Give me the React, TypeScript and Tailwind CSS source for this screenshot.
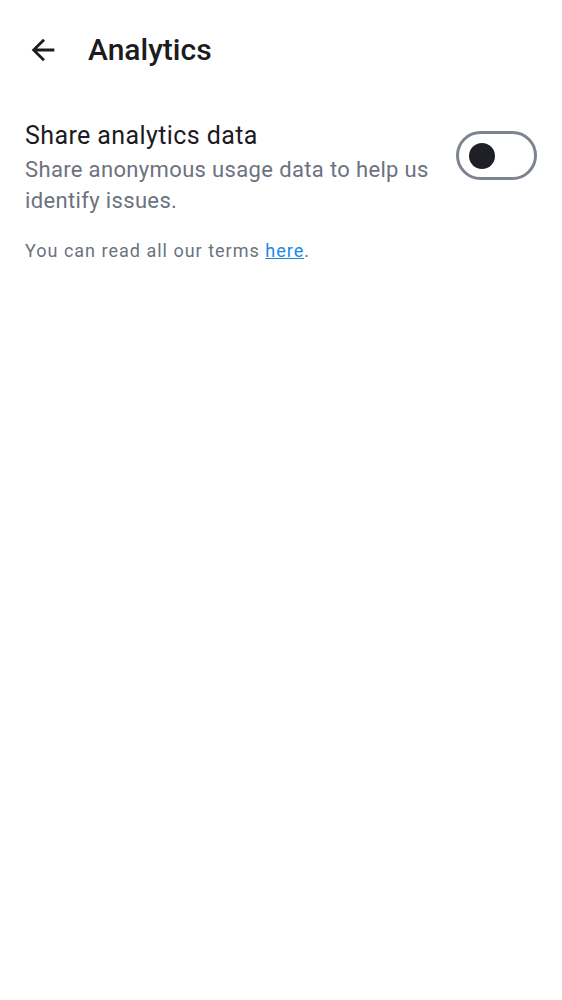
import React from "react";

export default function App() {
  return (
    <div className="w-[562px] h-[1000px] bg-white" style={{ fontFamily: "Roboto, 'Noto Sans', sans-serif" }}>
      <div className="flex items-center h-[100px] pl-[26px]">
        <svg width="34" height="34" viewBox="0 0 24 24" fill="#1c1b1f">
          <path d="M20 11H7.83l5.59-5.59L12 4l-8 8 8 8 1.41-1.41L7.83 13H20v-2z" />
        </svg>
        <h1 className="ml-[28px] text-[30px] text-[#1c1b1f] font-medium leading-none">Analytics</h1>
      </div>
      <div className="flex items-start px-[25px] pt-[19px]">
        <div className="flex-1 pr-[10px]">
          <div className="text-[25px] text-[#1c1b1f] leading-[34px] tracking-[0.4px]">Share analytics data</div>
          <div className="mt-[1px] text-[22px] text-[#6b7280] leading-[31px] tracking-[0.35px]">
            Share anonymous usage data to help us identify issues.
          </div>
        </div>
        <div className="mt-[12px] w-[81px] h-[49px] rounded-full border-[3px] border-[#7c848f] flex items-center pl-[10px] shrink-0">
          <div className="w-[26px] h-[26px] rounded-full bg-[#1f2025]" />
        </div>
      </div>
      <div className="px-[25px] mt-[21px] text-[18px] text-[#6b7280] tracking-[1px]">
        You can read all our terms <a className="text-[#1a8ae6] underline">here</a>.
      </div>
    </div>
  );
}
